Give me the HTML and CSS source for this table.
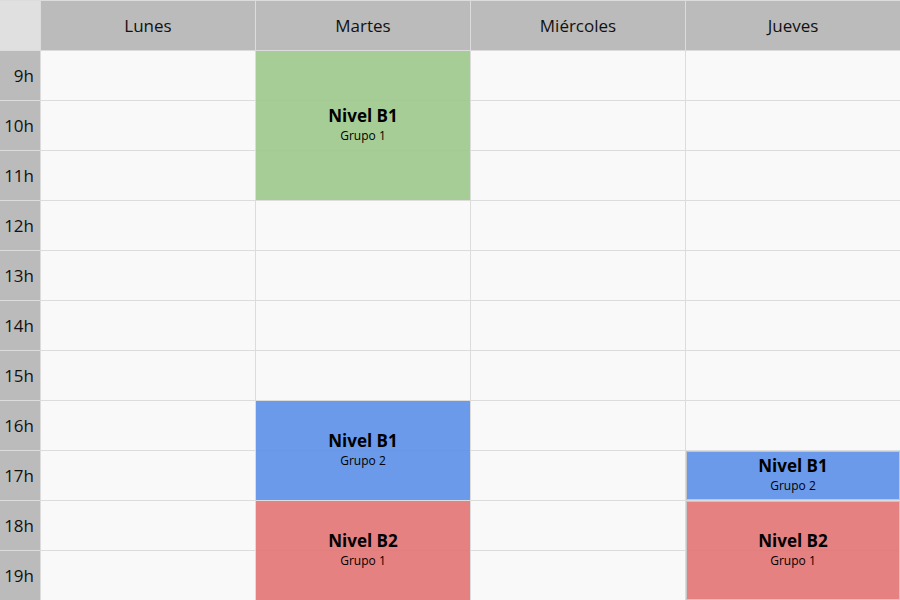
FILE: index.html
```html
<!DOCTYPE html>
<html lang="es">
<head>
<meta charset="utf-8">
<title>Horario</title>
<link rel="stylesheet" href="styles.css">
</head>
<body>
<div class="schedule">
  <div class="grid">
    <div class="corner"></div>
    <div class="day">Lunes</div>
    <div class="day">Martes</div>
    <div class="day">Miércoles</div>
    <div class="day">Jueves</div>

    <div class="hour">9h</div><div class="slot"></div><div class="slot"></div><div class="slot"></div><div class="slot"></div>
    <div class="hour">10h</div><div class="slot"></div><div class="slot"></div><div class="slot"></div><div class="slot"></div>
    <div class="hour">11h</div><div class="slot"></div><div class="slot"></div><div class="slot"></div><div class="slot"></div>
    <div class="hour">12h</div><div class="slot"></div><div class="slot"></div><div class="slot"></div><div class="slot"></div>
    <div class="hour">13h</div><div class="slot"></div><div class="slot"></div><div class="slot"></div><div class="slot"></div>
    <div class="hour">14h</div><div class="slot"></div><div class="slot"></div><div class="slot"></div><div class="slot"></div>
    <div class="hour">15h</div><div class="slot"></div><div class="slot"></div><div class="slot"></div><div class="slot"></div>
    <div class="hour">16h</div><div class="slot"></div><div class="slot"></div><div class="slot"></div><div class="slot"></div>
    <div class="hour">17h</div><div class="slot"></div><div class="slot"></div><div class="slot"></div><div class="slot"></div>
    <div class="hour">18h</div><div class="slot"></div><div class="slot"></div><div class="slot"></div><div class="slot"></div>
    <div class="hour">19h</div><div class="slot"></div><div class="slot"></div><div class="slot"></div><div class="slot"></div>
  </div>

  <div class="events">
    <div class="event green col-mar rows-9-12">
      <div class="ev-title">Nivel B1</div>
      <div class="ev-sub">Grupo 1</div>
    </div>
    <div class="event blue col-mar rows-16-18">
      <div class="ev-title">Nivel B1</div>
      <div class="ev-sub">Grupo 2</div>
    </div>
    <div class="event red col-mar rows-18-20">
      <div class="ev-title">Nivel B2</div>
      <div class="ev-sub">Grupo 1</div>
    </div>
    <div class="event blue boxed col-jue rows-17-18">
      <div class="ev-title">Nivel B1</div>
      <div class="ev-sub">Grupo 2</div>
    </div>
    <div class="event red boxed col-jue rows-18-20">
      <div class="ev-title">Nivel B2</div>
      <div class="ev-sub">Grupo 1</div>
    </div>
  </div>
</div>
</body>
</html>
```

FILE: styles.css
```css
html, body {
  margin: 0;
  padding: 0;
  background: #f9f9f9;
}

body {
  font-family: "Open Sans", "DejaVu Sans", sans-serif;
  color: #111;
  overflow: hidden;
}

.schedule {
  position: relative;
  width: 900px;
  height: 600px;
  overflow: hidden;
}

.grid,
.events {
  display: grid;
  grid-template-columns: 40px repeat(4, 214px);
  grid-template-rows: repeat(12, 49px);
  gap: 1px;
  padding-top: 1px;
}

.grid {
  background: #dcdcdc;
}

.corner {
  background: #e0e0e0;
}

.day {
  background: #bbbbbb;
  display: flex;
  align-items: center;
  justify-content: center;
  font-size: 17px;
  color: #111;
}

.hour {
  background: #bbbbbb;
  display: flex;
  align-items: center;
  justify-content: flex-end;
  padding-right: 6px;
  font-size: 17px;
  color: #111;
}

.slot {
  background: #f9f9f9;
}

.events {
  position: absolute;
  top: 0;
  left: 0;
  right: 0;
  bottom: 0;
}

.event {
  display: flex;
  flex-direction: column;
  align-items: center;
  justify-content: center;
  color: #000;
  padding-bottom: 4px;
}

.event.boxed {
  border: 1px solid #c6c6c6;
}

.green { background: rgba(157, 200, 139, 0.9); }
.blue  { background: rgba(90, 143, 231, 0.9); }
.red   { background: rgba(227, 115, 115, 0.9); }

.ev-title {
  font-size: 17px;
  font-weight: 700;
  line-height: normal;
}

.ev-sub {
  font-size: 12px;
  line-height: normal;
}

.col-mar { grid-column: 3; }
.col-jue { grid-column: 5; }

.rows-9-12  { grid-row: 2 / 5; }
.rows-16-18 { grid-row: 9 / 11; }
.rows-17-18 { grid-row: 10 / 11; }
.rows-18-20 { grid-row: 11 / 13; }
```
